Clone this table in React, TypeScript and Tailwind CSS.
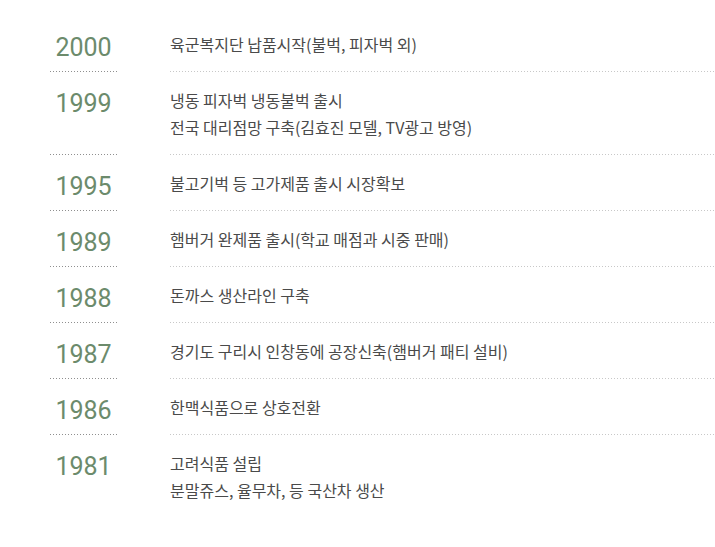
import React from 'react';

type HistoryItem = {
    year: string;
    lines: string[];
};

const history: HistoryItem[] = [
    { year: '2000', lines: ['육군복지단 납품시작(불벅, 피자벅 외)'] },
    { year: '1999', lines: ['냉동 피자벅 냉동불벅 출시', '전국 대리점망 구축(김효진 모델, TV광고 방영)'] },
    { year: '1995', lines: ['불고기벅 등 고가제품 출시 시장확보'] },
    { year: '1989', lines: ['햄버거 완제품 출시(학교 매점과 시중 판매)'] },
    { year: '1988', lines: ['돈까스 생산라인 구축'] },
    { year: '1987', lines: ['경기도 구리시 인창동에 공장신축(햄버거 패티 설비)'] },
    { year: '1986', lines: ['한맥식품으로 상호전환'] },
    { year: '1981', lines: ['고려식품 설립', '분말쥬스, 율무차, 등 국산차 생산'] },
];

const HistoryRow: React.FC<{ item: HistoryItem; last: boolean }> = ({ item, last }) => {
    return (
        <div className="flex">
            <div className="w-[67px] flex-shrink-0 flex flex-col">
                <div className="pt-[20px] pb-[11px] flex-grow text-center font-['Roboto',sans-serif] text-[25px] leading-[24px] text-[#6c8b6c]">
                    {item.year}
                </div>
                {!last && (
                    <div className="h-px bg-[repeating-linear-gradient(to_right,#8f8f8f_0_1px,transparent_1px_3px)]" />
                )}
            </div>
            <div className="w-[53px] flex-shrink-0" />
            <div className="flex-grow flex flex-col">
                <div className="pt-[15px] pb-[13px] flex-grow text-[16px] leading-[27px] text-[#4a4a4a] font-['Noto_Sans_CJK_KR',sans-serif]">
                    {item.lines.map((line, i) => (
                        <p key={i}>{line}</p>
                    ))}
                </div>
                {!last && (
                    <div className="h-px bg-[repeating-linear-gradient(to_right,#c8c8c8_0_1px,transparent_1px_3px)]" />
                )}
            </div>
        </div>
    );
};

const App: React.FC = () => {
    return (
        <div className="w-[715px] h-[547px] bg-white overflow-hidden pt-[16px] pl-[50px]">
            {history.map((item, index) => (
                <HistoryRow key={item.year} item={item} last={index === history.length - 1} />
            ))}
        </div>
    );
};

export default App;
